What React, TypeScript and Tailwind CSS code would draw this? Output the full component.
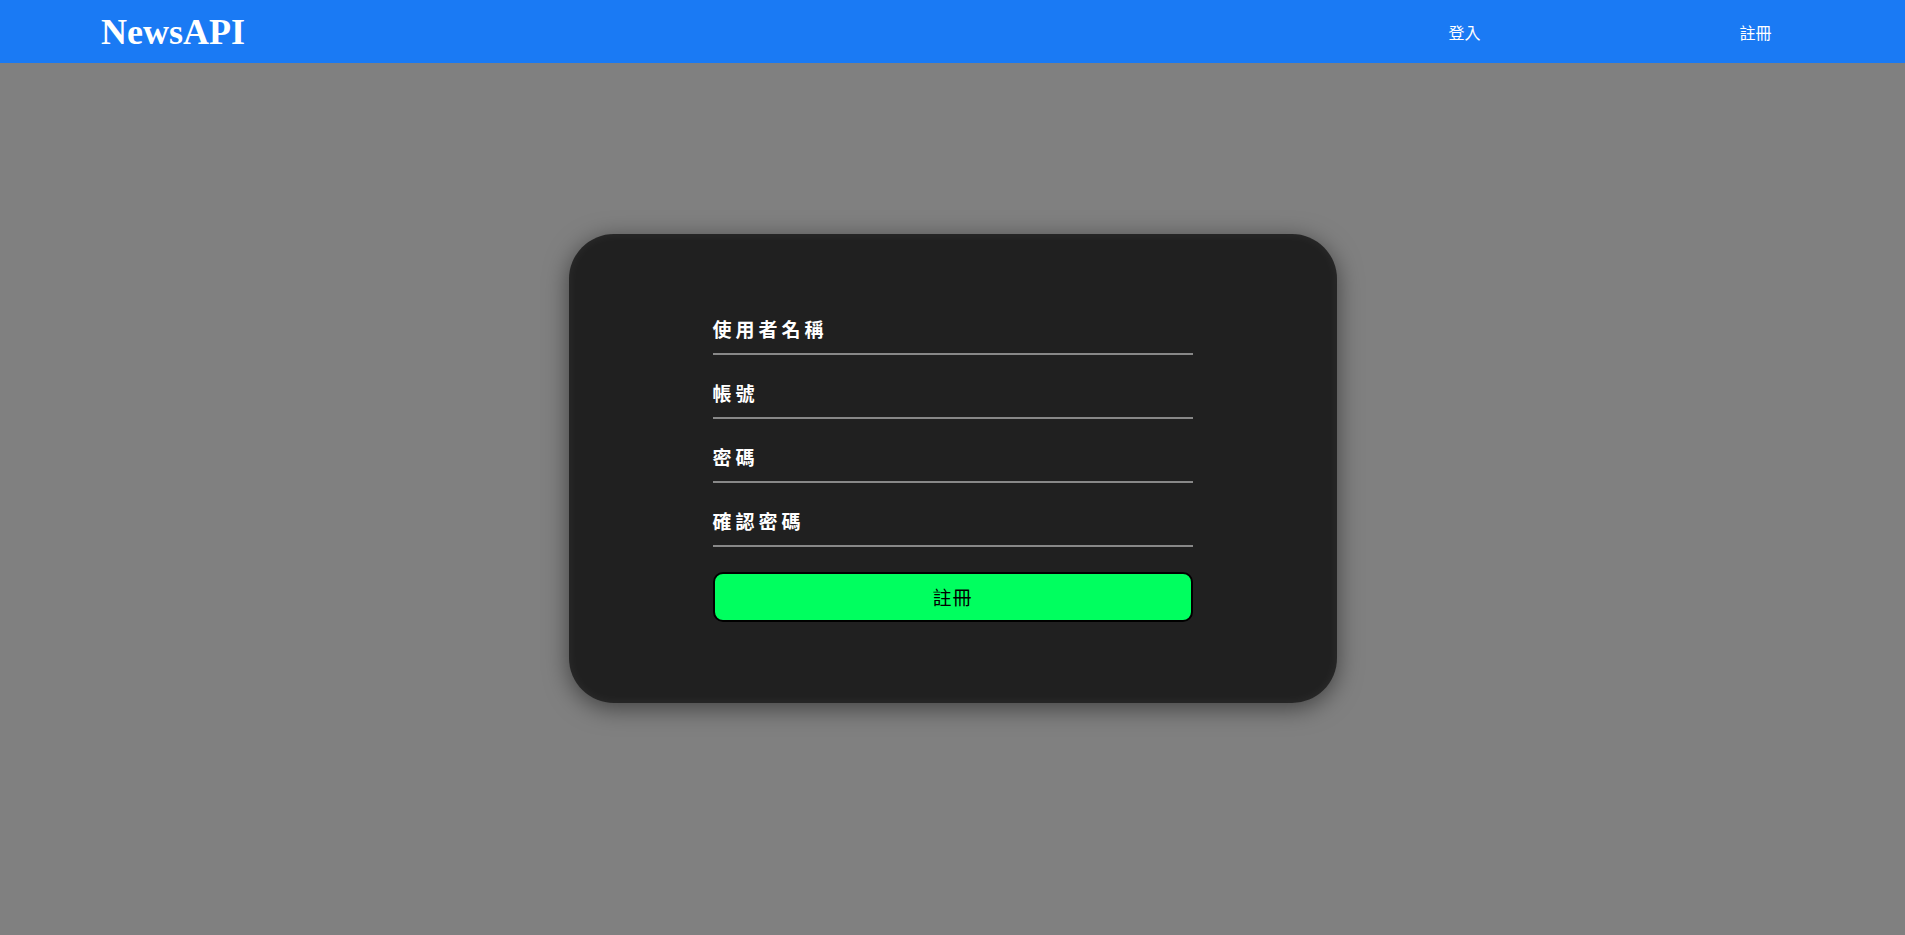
const fields = ["使用者名稱", "帳號", "密碼", "確認密碼"]

const cjk = "font-['Noto_Sans_CJK_TC','Noto_Sans',sans-serif]"

const Header = () => {
  return (
    <header className="h-[63px] w-full bg-[#1a7af4] flex items-center justify-between pl-[101px] pr-[4px]">
      <h1 className="font-['Liberation_Serif',serif] font-bold text-[36px] leading-none text-white">
        NewsAPI
      </h1>
      <nav className={`flex text-white text-[16px] ${cjk}`}>
        <a className="w-[291px] text-center cursor-pointer">登入</a>
        <a className="w-[291px] text-center cursor-pointer">註冊</a>
      </nav>
    </header>
  )
}

const App = () => {
  return (
    <div className="min-h-[935px] bg-[#808080] flex flex-col">
      <Header />
      <main className="flex justify-center pt-[171px]">
        <form
          className={`w-[768px] bg-[#202020] rounded-[45px] px-[144px] pt-[57px] pb-[81px]
            shadow-[0_5px_25px_rgba(0,0,0,0.5),inset_0_0_12px_rgba(255,255,255,0.06)] ${cjk}`}
        >
          {fields.map((label) => (
            <div
              key={label}
              className="h-[64px] flex items-end pb-[15px] border-b-2 border-[#888888]"
            >
              <label className="text-white font-bold text-[19px] leading-none tracking-[4px]">
                {label}
              </label>
            </div>
          ))}
          <button
            type="button"
            className="mt-[25px] w-full h-[50px] bg-[#00ff5f] border-2 border-black rounded-[10px] text-black text-[19px] tracking-[1px]"
          >
            註冊
          </button>
        </form>
      </main>
    </div>
  )
}

export default App
